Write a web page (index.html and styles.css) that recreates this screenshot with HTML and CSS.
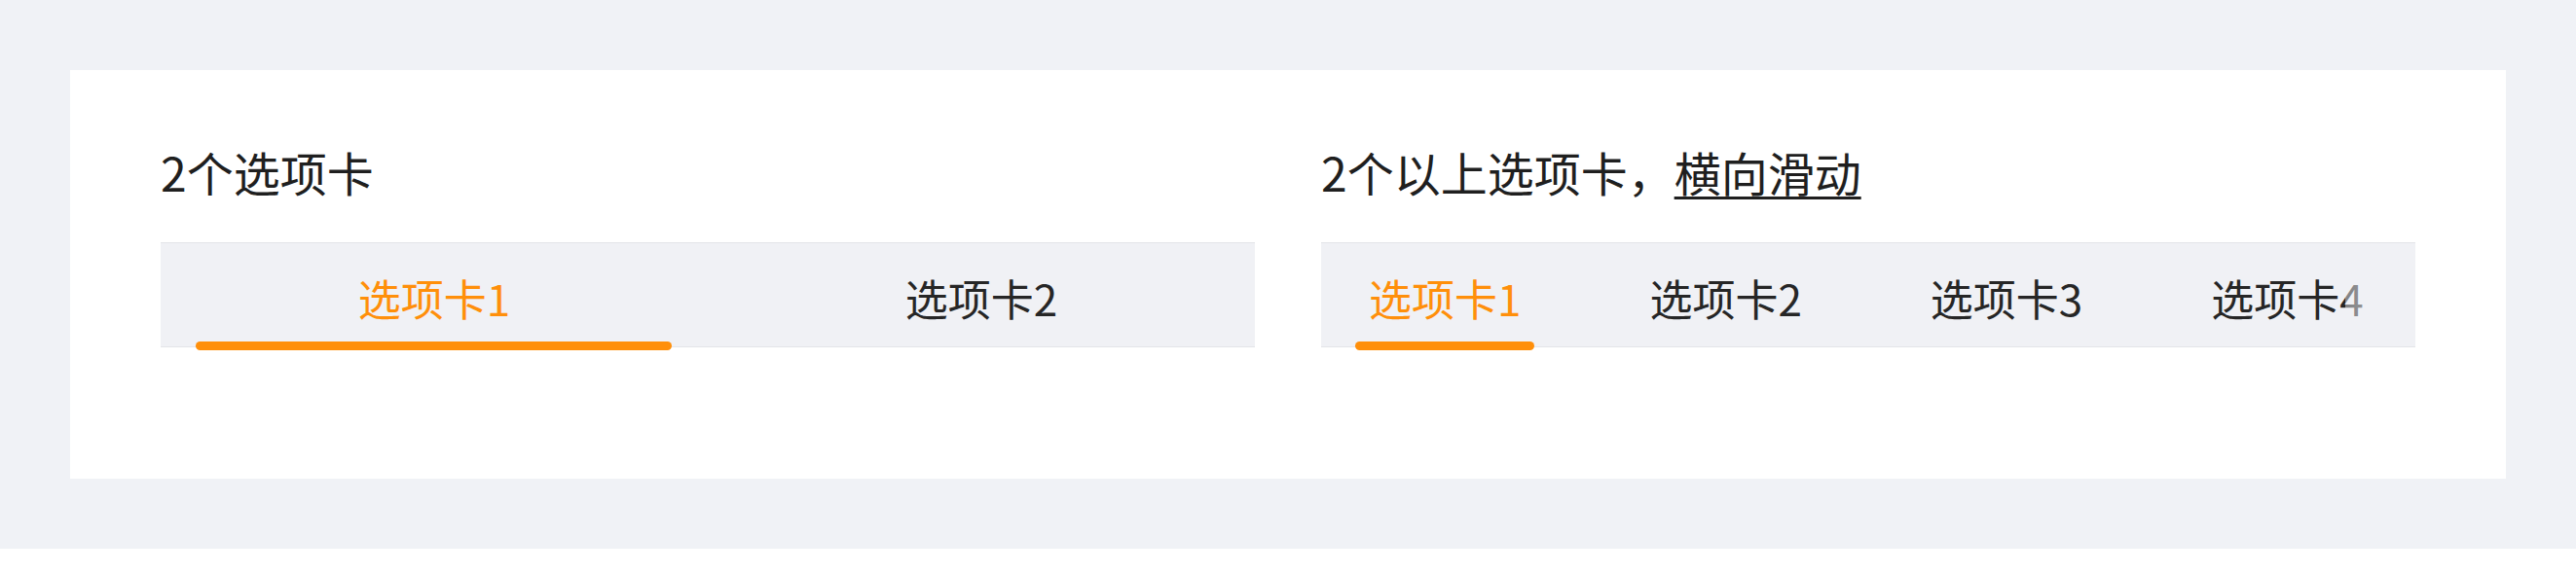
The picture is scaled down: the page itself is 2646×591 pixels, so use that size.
FILE: index.html
```html
<!DOCTYPE html>
<html lang="zh-CN">
<head>
<meta charset="utf-8">
<title>选项卡</title>
<link rel="stylesheet" href="styles.css">
</head>
<body>
<div class="page">
  <div class="card">
    <section class="col">
      <h2 class="title">2个选项卡</h2>
      <div class="tabbar tabbar-fixed">
        <div class="tab active">选项卡1<span class="ink"></span></div>
        <div class="tab">选项卡2</div>
      </div>
    </section>
    <section class="col">
      <h2 class="title">2个以上选项卡，<span class="ul">横向滑动</span></h2>
      <div class="tabbar tabbar-scroll">
        <div class="tab active">选项卡1<span class="ink"></span></div>
        <div class="tab">选项卡2</div>
        <div class="tab">选项卡3</div>
        <div class="tab">选项卡4</div>
        <div class="fade"></div>
      </div>
    </section>
  </div>
</div>
</body>
</html>
```

FILE: styles.css
```css
html, body {
  margin: 0;
  padding: 0;
  background: #ffffff;
}

body {
  font-family: "Noto Sans CJK SC", "Noto Sans", sans-serif;
  color: #222222;
}

.page {
  background: #f0f2f6;
  padding: 72px;
  height: 420px;
}

.card {
  background: #ffffff;
  height: 420px;
  box-sizing: border-box;
  padding: 80px 93px 0 93px;
  display: grid;
  grid-template-columns: 1fr 1fr;
  column-gap: 68px;
}

.col {
  min-width: 0;
}

.title {
  margin: 0 0 49px 0;
  font-size: 48px;
  line-height: 48px;
  font-weight: 400;
  color: #1f1f1f;
  white-space: nowrap;
}

.ul {
  text-decoration: underline;
  text-decoration-thickness: 3px;
  text-underline-offset: 5px;
}

.tabbar {
  position: relative;
  display: flex;
  background: #f0f1f5;
  border-top: 1px solid #e3e4e8;
  border-bottom: 1px solid #e3e4e8;
  height: 106px;
}

.tab {
  position: relative;
  box-sizing: border-box;
  height: 106px;
  padding-top: 34px;
  font-size: 44px;
  line-height: 44px;
  color: #262626;
  white-space: nowrap;
}

.tab.active {
  color: #ff8f0a;
}

.ink {
  position: absolute;
  bottom: -4px;
  height: 9px;
  border-radius: 5px;
  background: #ff8f0a;
}

.tabbar-fixed .tab {
  flex: 1 1 0;
  text-align: center;
}

.tabbar-fixed .ink {
  left: 36px;
  right: 37px;
}

.tabbar-scroll {
  padding-left: 35px;
  gap: 104px;
}

.tabbar-scroll .tab {
  padding-left: 14px;
  padding-right: 14px;
}

.tabbar-scroll .ink {
  left: 0;
  right: 0;
}

.fade {
  position: absolute;
  top: 0;
  right: 0;
  bottom: 0;
  width: 72px;
  background: linear-gradient(90deg, rgba(240, 241, 245, 0.45), rgba(240, 241, 245, 0.6) 45%, rgba(240, 241, 245, 0.95));
}
```
